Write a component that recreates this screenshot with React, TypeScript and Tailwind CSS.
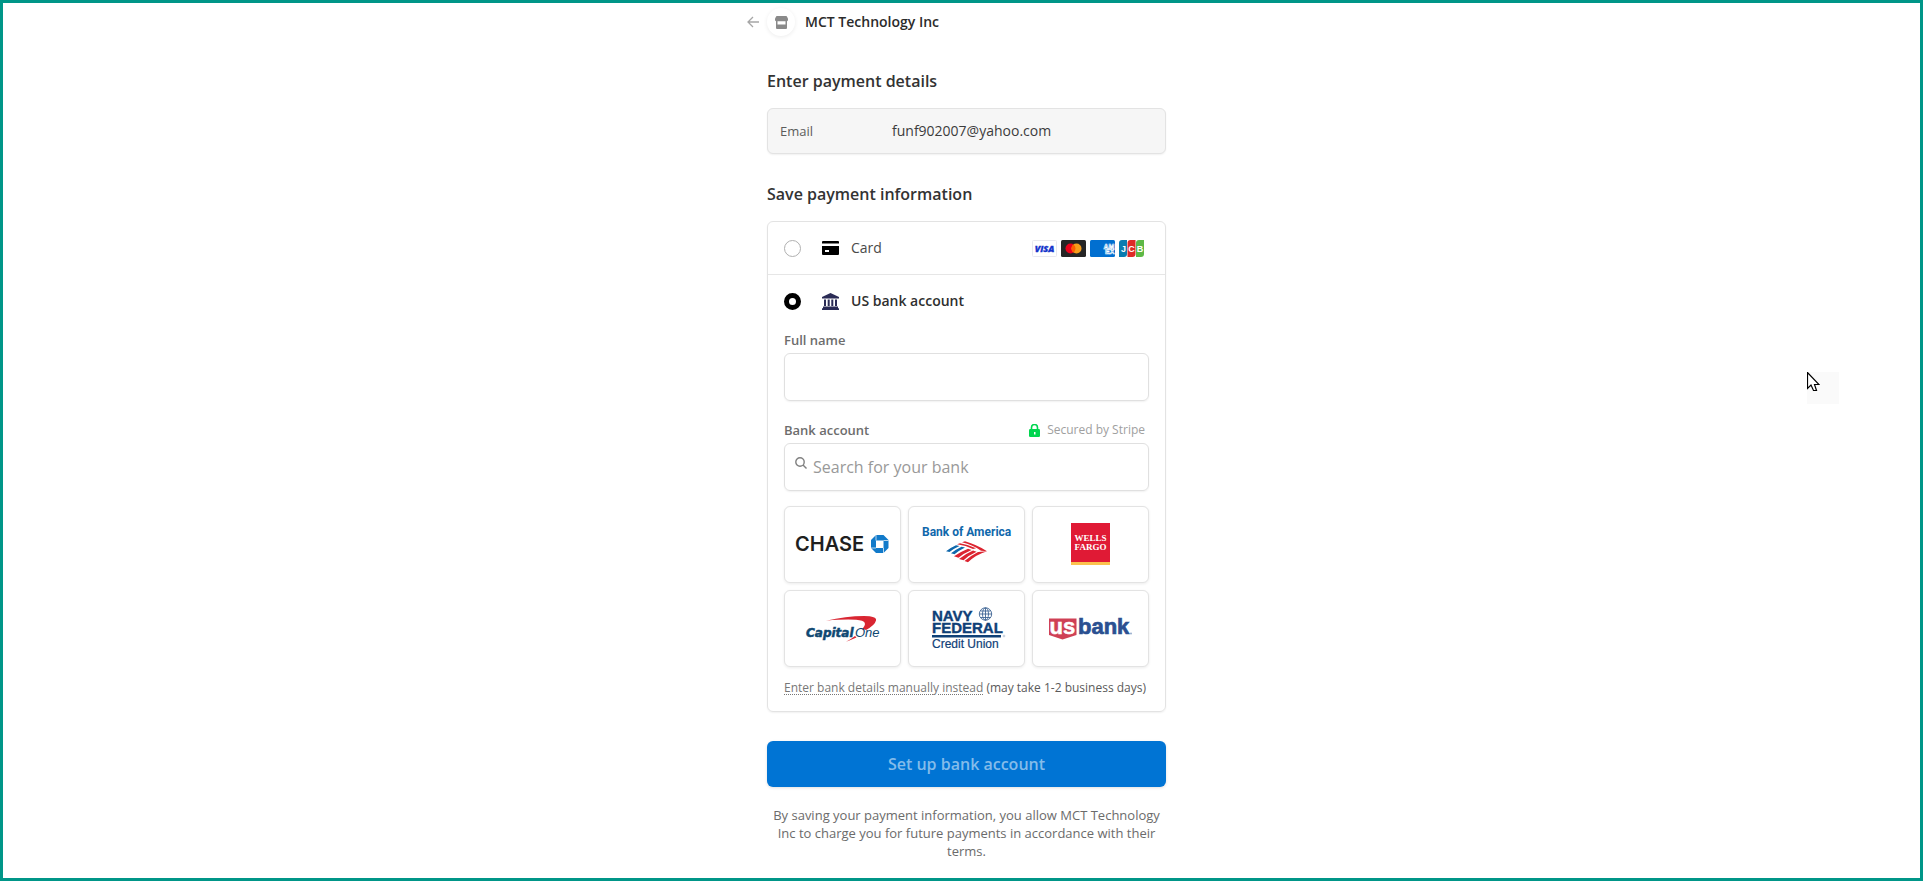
import { useState } from "react";
import type { ReactNode } from "react";

function ChaseLogo() {
  return (
    <svg viewBox="0 0 117 77" className="w-[117px] h-[77px] shrink-0" aria-label="Chase">
      <text x="11" y="45" fontFamily="Inter" fontWeight="600" fontSize="20" fill="#1f1f1f">
        CHASE
      </text>
      <path d="M92 29h7.500l5 5v8l-5 5H92l-5-5v-8z" fill="#117aca" />
      <path d="M92 34.500h7.500V42H92z" fill="#fff" />
      <path d="M92 29v5.500M104.500 34.500h-5M99.500 47v-5M87 42h5" stroke="#fff" strokeWidth="0.700" />
    </svg>
  );
}

function BankOfAmericaLogo() {
  return (
    <svg viewBox="0 0 117 77" className="w-[117px] h-[77px] shrink-0" aria-label="Bank of America">
      <text x="14" y="30" fontFamily="Roboto" fontWeight="700" fontSize="12" fill="#0f67ab">
        Bank of America
      </text>
      <g fill="#dc2430">
        <path d="M46 50.200Q53 45.500 60 42.700l3.600 1.200Q56 47 50.500 51.800z" />
        <path d="M51 53Q58 47.500 65 44.500l3.600 1.200Q61 49 55.500 54.300z" />
        <path d="M56.500 55Q63 49.500 70 46l9-.8q-11 3.300-19 11z" />
        <path d="M49 38.300l3-1q9 1.500 16 5l-3 .8Q58 39.500 49 38.300z" />
        <path d="M54 36.300l3-1q12 3.500 22 9.900l-6-.5Q65 39 54 36.300z" />
      </g>
      <g fill="#0f67ab">
        <path d="M38 45.300Q43 41.500 48 39.300l3.500.6Q46 42.300 41.500 46z" />
        <path d="M43 47.300Q48 43.300 53.500 40.700l3.500.8Q51 44.500 46.500 48.300z" />
      </g>
    </svg>
  );
}

function WellsFargoLogo() {
  return (
    <svg viewBox="0 0 117 77" className="w-[117px] h-[77px] shrink-0" aria-label="Wells Fargo">
      <path d="M39 17h39v39H39z" fill="#e01a35" />
      <path d="M39 56h39v3H39z" fill="#fbc24e" />
      <text fontFamily="Liberation Serif" fontWeight="700" fontSize="9" fill="#fff" textAnchor="middle">
        <tspan x="58.500" y="35">WELLS</tspan>
        <tspan x="58.500" y="44">FARGO</tspan>
      </text>
    </svg>
  );
}

function CapitalOneLogo() {
  return (
    <svg viewBox="0 0 117 77" className="w-[117px] h-[77px] shrink-0" aria-label="Capital One">
      <path
        d="M42 30.700Q62 26 80 26q13 0 12 4.500Q91 35 82 40q-2-1-4-.5 6-6.500 0-8.700-9-2.300-36-.1zM71 46l1.500 1.500Q68 49.500 62 51.700 68 48.500 71 46z"
        fill="#d92632"
      />
      <g fill="#0f4872" stroke="#0f4872">
        <text x="22" y="47" fontFamily="DejaVu Sans" fontWeight="700" fontStyle="italic" fontSize="12" strokeWidth="0.500">
          Capital
        </text>
        <text x="71" y="47" fontFamily="Liberation Sans" fontStyle="italic" fontSize="13" strokeWidth="0">
          One
        </text>
      </g>
    </svg>
  );
}

function NavyFederalLogo() {
  return (
    <svg viewBox="0 0 117 77" className="w-[117px] h-[77px] shrink-0" aria-label="Navy Federal Credit Union">
      <g fontFamily="Liberation Sans" fill="#0f4077" stroke="#0f4077">
        <text fontWeight="700" fontSize="15" strokeWidth="0.400">
          <tspan x="24" y="31">NAVY</tspan>
          <tspan x="24" y="43">FEDERAL</tspan>
        </text>
        <text x="24" y="58" fontSize="12" strokeWidth="0.200">Credit Union</text>
      </g>
      <path d="M24 45h69v2.500H24z" fill="#0f4077" />
      <g fill="none" stroke="#3f6595" strokeWidth="0.900">
        <circle cx="77.500" cy="24" r="6.200" />
        <ellipse cx="77.500" cy="24" rx="3" ry="6.200" />
        <path d="M77.500 18v12.500M71.500 24H84M72.500 21h10M72.500 27.500h10" />
      </g>
      <circle cx="96" cy="46" r="0.900" fill="none" stroke="#8aa0bd" strokeWidth="0.500" />
    </svg>
  );
}

function UsBankLogo() {
  return (
    <svg viewBox="0 0 117 77" className="w-[117px] h-[77px] shrink-0" aria-label="US Bank">
      <path d="M17 28.500h27.500V45l-14 4.500L17 45z" fill="#cf4055" />
      <g fontFamily="Liberation Sans" fontWeight="700" fontSize="22">
        <text x="17.500" y="44" fill="#fff" stroke="#fff" strokeWidth="0.500">us</text>
        <text x="46" y="44" fill="#2a5091" stroke="#2a5091" strokeWidth="0.700">bank</text>
      </g>
      <circle cx="99" cy="43.500" r="0.900" fill="#8ea5c8" />
    </svg>
  );
}

function CardBrands() {
  return (
    <div className="mr-[5px] ml-auto flex gap-1">
      <svg viewBox="0 0 25 17" className="w-[25px] h-[17px]" aria-label="Visa">
        <rect x="0.500" y="0.500" width="24" height="16" rx="1" fill="#fff" stroke="#e8e8ee" />
        <text x="12.500" y="12" textAnchor="middle" fontFamily="Open Sans" fontWeight="800" fontStyle="italic" fontSize="9" fill="#1434cb" stroke="#1434cb" strokeWidth="0.300">
          VISA
        </text>
      </svg>
      <svg viewBox="0 0 25 17" className="w-[25px] h-[17px]" aria-label="Mastercard">
        <rect width="25" height="17" rx="1.500" fill="#252525" />
        <circle cx="9.500" cy="8.500" r="5" fill="#eb001b" />
        <circle cx="15.500" cy="8.500" r="5" fill="#f79e1b" />
        <path d="M12.500 4.500a5 5 0 0 1 0 8 5 5 0 0 1 0-8z" fill="#ff5f00" />
      </svg>
      <svg viewBox="0 0 25 17" className="w-[25px] h-[17px]" aria-label="American Express">
        <rect width="25" height="17" rx="1.500" fill="#016fd0" />
        <text fontFamily="Liberation Sans" fontWeight="700" fontSize="7" fill="none" stroke="#fff" strokeWidth="0.600">
          <tspan x="13.500" y="8.500">AM</tspan>
          <tspan x="15" y="14">EX</tspan>
        </text>
      </svg>
      <svg viewBox="0 0 25 17" className="w-[25px] h-[17px]" aria-label="JCB">
        <path d="M3 0h5v14a3 3 0 0 1-3 3H0V3a3 3 0 0 1 3-3z" fill="#0b7cb0" />
        <path d="M11.500 0h5v14a3 3 0 0 1-3 3h-5V3a3 3 0 0 1 3-3z" fill="#de2a26" />
        <path d="M20 0h5v14a3 3 0 0 1-3 3h-5V3a3 3 0 0 1 3-3z" fill="#5eb846" />
        <g fontFamily="Liberation Sans" fontWeight="700" fontSize="9" fill="#fff" textAnchor="middle">
          <text x="4.500" y="11.500">J</text>
          <text x="12.500" y="11.500">C</text>
          <text x="21" y="11.500">B</text>
        </g>
      </svg>
    </div>
  );
}

const banks: { name: string; logo: ReactNode }[] = [
  { name: "Chase", logo: <ChaseLogo /> },
  { name: "Bank of America", logo: <BankOfAmericaLogo /> },
  { name: "Wells Fargo", logo: <WellsFargoLogo /> },
  { name: "Capital One", logo: <CapitalOneLogo /> },
  { name: "Navy Federal Credit Union", logo: <NavyFederalLogo /> },
  { name: "US Bank", logo: <UsBankLogo /> },
];

const radioClass =
  "appearance-none w-[17px] h-[17px] rounded-full border border-[#b0b0b0] bg-white checked:border-[5px] checked:border-black";

export default function App() {
  const [method, setMethod] = useState("bank");

  return (
    <div className="relative min-h-screen border-[3px] border-[#009688] bg-white pl-[10px] font-['Open_Sans',sans-serif] text-[#30313d]">
      <main className="mx-auto w-full max-w-[399px] pt-[5px]">
        {/* Merchant header */}
        <header className="-ml-5 flex items-center">
          <button type="button" aria-label="Back" className="w-5">
            <svg viewBox="0 0 12 12" className="w-3 h-3" fill="none" stroke="#a6a6a6" strokeWidth="1.300">
              <path d="M6 1L1 6l5 5M1 6h11" />
            </svg>
          </button>
          <span className="flex h-7 w-7 items-center justify-center rounded-full bg-white shadow-[0_1px_4px_rgba(0,0,0,0.08)]">
            <svg viewBox="0 0 13 13" className="w-[13px] h-[13px]" fill="#8a8a8a">
              <path d="M1.500 0h10L13 2.500V4a1.500 1.500 0 0 1-1 1.300H1A1.500 1.500 0 0 1 0 4V2.500z" />
              <path d="M1 5h1.500v3.500h8V5H12v7a1 1 0 0 1-1 1H2a1 1 0 0 1-1-1z" />
            </svg>
          </span>
          <span className="ml-[10px] text-[14px] leading-5 font-semibold text-[#2b2b2b]">MCT Technology Inc</span>
        </header>

        <h2 className="mt-[33px] mb-[15px] text-[16px] leading-6 font-semibold text-[#333]">Enter payment details</h2>
        <dl className="flex h-[46px] items-center rounded-md border border-[#e3e3e3] bg-[#f6f6f6] px-3 shadow-[0_1px_2px_rgba(0,0,0,0.06)]">
          <dt className="w-28 text-[13px] leading-5 text-[#5c5c5c]">Email</dt>
          <dd className="text-[14px] leading-5 text-[#3c3c3c]">funf902007@yahoo.com</dd>
        </dl>

        <h2 className="mt-7 mb-[15px] text-[16px] leading-6 font-semibold text-[#333]">Save payment information</h2>
        <section className="rounded-md border border-[#e3e3e3] shadow-[0_1px_2px_rgba(0,0,0,0.06)]">
          <label className="flex h-[53px] items-center border-b border-[#e6e6e6] px-4">
            <input type="radio" name="method" checked={method === "card"} onChange={() => setMethod("card")} className={radioClass} />
            <svg viewBox="0 0 17 14" className="ml-[21px] w-[17px] h-[14px]">
              <path d="M1 0h15a1 1 0 0 1 1 1v1.500H0V1a1 1 0 0 1 1-1zM0 5h17v8a1 1 0 0 1-1 1H1a1 1 0 0 1-1-1z" fill="#000" />
              <path d="M3 9h4v2H3z" fill="#fff" />
            </svg>
            <span className="ml-3 text-[14px] leading-5 text-[#4a4a4a]">Card</span>
            <CardBrands />
          </label>

          <label className="flex h-[52px] items-center px-4">
            <input type="radio" name="method" checked={method === "bank"} onChange={() => setMethod("bank")} className={radioClass} />
            <svg viewBox="0 0 17 17" className="ml-[21px] w-[17px] h-[17px]" fill="#2a2b55">
              <path d="M8.500 0L17 4v1.500H0V4zM2 6.500h2V13H2zM5.700 6.500h2V13h-2zM9.300 6.500h2V13h-2zM13 6.500h2V13h-2zM1 13.500h15V15l1 .5V17H0v-1.500l1-.5z" />
            </svg>
            <span className="ml-3 text-[14px] leading-5 font-semibold text-[#2f2f2f]">US bank account</span>
          </label>

          <div className="px-4 pt-1 pb-[14px]">
            <label htmlFor="full-name" className="block text-[13px] leading-[18px] font-semibold text-[#6d6d6d]">
              Full name
            </label>
            <input
              id="full-name"
              type="text"
              className="mt-1 block h-12 w-full rounded-md border border-[#e0e0e0] px-3 shadow-[0_1px_2px_rgba(0,0,0,0.06)]"
            />

            <div className="mt-5 flex items-center pr-1">
              <label htmlFor="bank-search" className="text-[13px] leading-[18px] font-semibold text-[#6d6d6d]">
                Bank account
              </label>
              <svg viewBox="0 0 11 13" className="ml-auto w-[11px] h-[13px]">
                <path d="M2.500 6V3.500a3 3 0 0 1 6 0V6" fill="none" stroke="#00d64f" strokeWidth="1.600" />
                <rect y="5" width="11" height="8" rx="1.200" fill="#00d64f" />
                <path d="M5 8h1.500v2.500H5z" fill="#fff" />
              </svg>
              <span className="ml-[7px] text-[12px] leading-[18px] text-[#a0a0a0]">Secured by Stripe</span>
            </div>
            <div className="relative mt-1">
              <svg viewBox="0 0 12 12" className="absolute top-[14px] left-[11px] w-3 h-3" fill="none" stroke="#808080" strokeWidth="1.400">
                <circle cx="5" cy="5" r="4.200" />
                <path d="M8 8l3.500 3.500" />
              </svg>
              <input
                id="bank-search"
                type="text"
                placeholder="Search for your bank"
                className="block h-12 w-full rounded-md border border-[#e0e0e0] pr-3 pl-7 text-[16px] shadow-[0_1px_2px_rgba(0,0,0,0.06)] placeholder:text-[#999]"
              />
            </div>

            <div className="mt-[15px] grid grid-cols-3 gap-[7px]">
              {banks.map((bank) => (
                <button
                  key={bank.name}
                  type="button"
                  aria-label={bank.name}
                  className="flex h-[77px] items-center justify-center overflow-hidden rounded-md border border-[#e3e3e3] bg-white shadow-[0_1px_3px_rgba(0,0,0,0.08)]"
                >
                  {bank.logo}
                </button>
              ))}
            </div>

            <p className="mt-3 text-[12px] leading-[18px] whitespace-nowrap text-[#5a5a5a]">
              <a href="#manual" className="text-[#777] underline decoration-dotted underline-offset-2">
                Enter bank details manually instead
              </a>{" "}
              (may take 1-2 business days)
            </p>
          </div>
        </section>

        <button
          type="submit"
          className="mt-[29px] h-[46px] w-full rounded-md bg-[#0074d4] text-[16px] font-semibold text-[#84bcea] shadow-[0_1px_3px_rgba(0,0,0,0.12)]"
        >
          Set up bank account
        </button>

        <p className="mt-[19px] text-center text-[13px] leading-[18px] text-[#6b6b6b]">
          By saving your payment information, you allow MCT Technology Inc to charge you for future payments in accordance with their terms.
        </p>
      </main>

      {/* Mouse pointer */}
      <div className="absolute top-[369px] right-[81px] h-8 w-8 bg-[#fafafa]">
        <svg viewBox="0 0 13 20" className="w-[13px] h-5">
          <path d="M.5.5v16l3.500-3.500 2.500 5.500h3L7.500 12.500h4.500z" fill="#fff" stroke="#000" strokeWidth="1.200" />
        </svg>
      </div>
    </div>
  );
}
